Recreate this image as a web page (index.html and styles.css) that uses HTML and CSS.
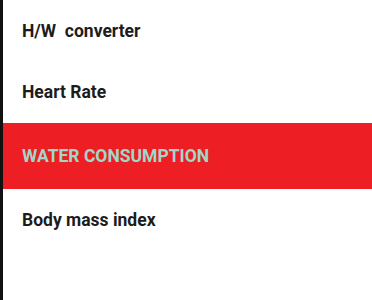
FILE: index.html
```html
<!DOCTYPE html>
<html>
<head>
<meta charset="utf-8">
<link rel="stylesheet" href="styles.css">
</head>
<body>
<div class="page">
  <ul class="menu">
    <li class="item">H/W  converter</li>
    <li class="item">Heart Rate</li>
    <li class="item active">WATER CONSUMPTION</li>
    <li class="item">Body mass index</li>
  </ul>
</div>
</body>
</html>
```
FILE: styles.css
```css
html, body {
  margin: 0;
  padding: 0;
  background: #ffffff;
}
.page {
  width: 372px;
  height: 300px;
  box-sizing: border-box;
  border-left: 3px solid #111111;
  overflow: hidden;
}
.menu {
  list-style: none;
  margin: 0;
  padding: 0;
}
.item {
  height: 62px;
  display: flex;
  align-items: center;
  padding-left: 19px;
  font-family: Roboto, "Liberation Sans", sans-serif;
  font-weight: 700;
  font-size: 17.5px;
  color: #1c1c1c;
  white-space: pre;
}
.item:first-child {
  height: 61px;
}
.item.active {
  height: 66px;
  background: #ed1f24;
  color: #9fd8c9;
}
```
